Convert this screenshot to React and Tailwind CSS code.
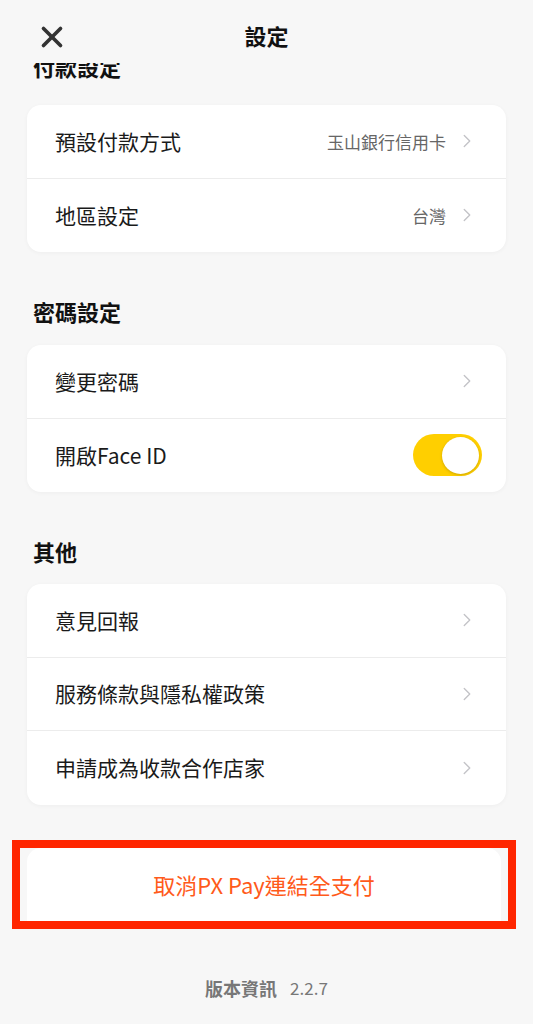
import { ChevronRight, X } from 'lucide-react'

const font = { fontFamily: '"Noto Sans CJK TC", "Noto Sans", sans-serif' }

function Row({ label, value, last, children }) {
  return (
    <div className={`flex h-[73.5px] items-center pl-[28px] pr-[28px] ${last ? '' : 'border-b border-[#ececec]'}`}>
      <span className="flex-1 text-[21px] text-[#1a1a1a]">{label}</span>
      {children ?? (
        <div className="flex items-center gap-[10px]">
          {value && <span className="text-[17px] text-[#666666]">{value}</span>}
          <ChevronRight className="h-[22px] w-[22px] text-[#c4c4c8]" strokeWidth={1.5} />
        </div>
      )}
    </div>
  )
}

function Card({ children }) {
  return (
    <div className="mx-[27px] overflow-hidden rounded-[14px] bg-white shadow-[0_1px_4px_rgba(0,0,0,0.04)]">
      {children}
    </div>
  )
}

function Toggle() {
  return (
    <div className="relative mr-[-4px] h-[42px] w-[69px] rounded-full bg-[#ffcf00]">
      <div className="absolute right-[3px] top-[2.5px] h-[37px] w-[37px] rounded-full bg-white shadow-[0_1px_3px_rgba(0,0,0,0.2)]" />
    </div>
  )
}

export default function App() {
  return (
    <div className="flex h-[1024px] w-[533px] flex-col overflow-hidden bg-[#f7f7f7]" style={font}>
      {/* Header */}
      <div className="relative z-10 flex h-[63px] shrink-0 items-center justify-center bg-[#f7f7f7]">
        <X className="absolute left-[35px] top-[20px] h-[34px] w-[34px] text-[#333333]" strokeWidth={2.6} />
        <h1 className="mt-[7px] text-[22px] font-bold text-[#111111]">設定</h1>
      </div>

      <div className="flex-1 overflow-hidden">
        <h2 className="mt-[-13px] mb-[23px] pl-[33px] text-[22px] font-bold leading-[32px] text-[#111111]">付款設定</h2>
        <Card>
          <Row label="預設付款方式" value="玉山銀行信用卡" />
          <Row label="地區設定" value="台灣" last />
        </Card>

        <h2 className="mt-[43px] mb-[18px] pl-[33px] text-[22px] font-bold leading-[32px] text-[#111111]">密碼設定</h2>
        <Card>
          <Row label="變更密碼" />
          <Row label="開啟Face ID" last>
            <Toggle />
          </Row>
        </Card>

        <h2 className="mt-[43px] mb-[17px] pl-[33px] text-[22px] font-bold leading-[32px] text-[#111111]">其他</h2>
        <Card>
          <Row label="意見回報" />
          <Row label="服務條款與隱私權政策" />
          <Row label="申請成為收款合作店家" last />
        </Card>

        <div className="ml-[12px] mt-[35px] w-[504px] border-[8px] border-[#ff2600] px-[7px]">
          <button className="flex h-[73px] w-full items-center justify-center rounded-t-[14px] bg-white text-[22px] text-[#ff5a1a]">
            取消PX Pay連結全支付
          </button>
        </div>

        <div className="mt-[46px] flex items-center justify-center gap-[13px]">
          <span className="text-[18px] font-bold text-[#777777]">版本資訊</span>
          <span className="text-[17px] text-[#777777]">2.2.7</span>
        </div>
      </div>
    </div>
  )
}
